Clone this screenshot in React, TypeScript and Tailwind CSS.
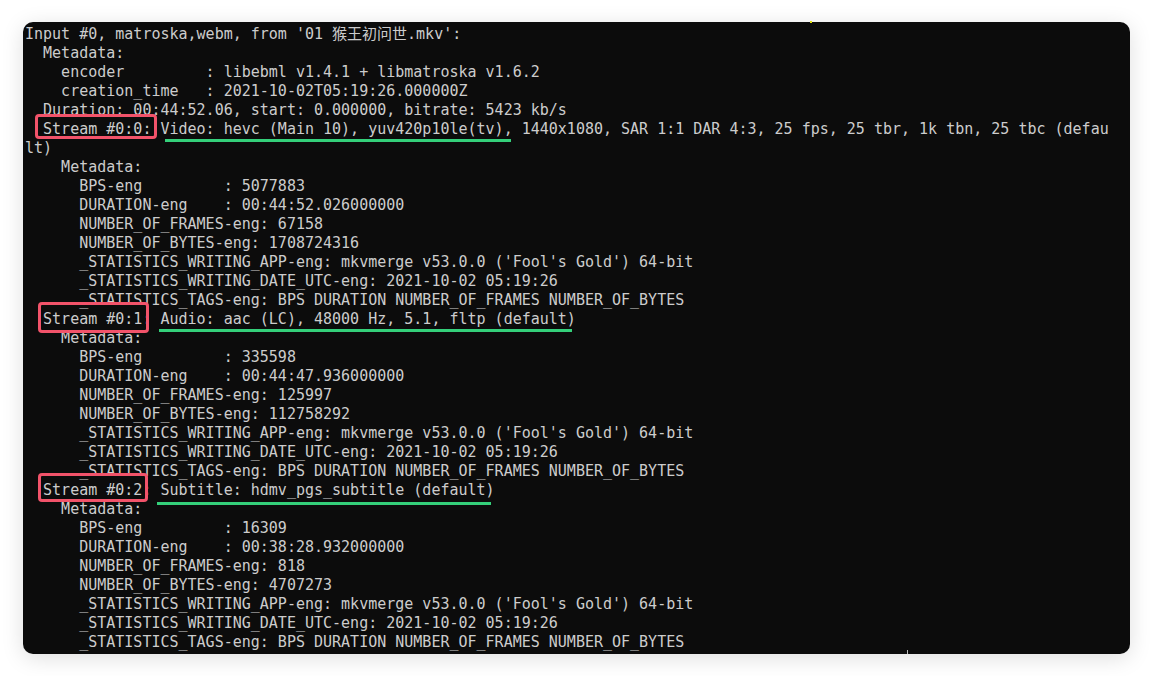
import React from "react";

const lines: string[] = [
  "Input #0, matroska,webm, from '01 猴王初问世.mkv':",
  "  Metadata:",
  "    encoder         : libebml v1.4.1 + libmatroska v1.6.2",
  "    creation_time   : 2021-10-02T05:19:26.000000Z",
  "  Duration: 00:44:52.06, start: 0.000000, bitrate: 5423 kb/s",
  "  Stream #0:0: Video: hevc (Main 10), yuv420p10le(tv), 1440x1080, SAR 1:1 DAR 4:3, 25 fps, 25 tbr, 1k tbn, 25 tbc (defau",
  "lt)",
  "    Metadata:",
  "      BPS-eng         : 5077883",
  "      DURATION-eng    : 00:44:52.026000000",
  "      NUMBER_OF_FRAMES-eng: 67158",
  "      NUMBER_OF_BYTES-eng: 1708724316",
  "      _STATISTICS_WRITING_APP-eng: mkvmerge v53.0.0 ('Fool's Gold') 64-bit",
  "      _STATISTICS_WRITING_DATE_UTC-eng: 2021-10-02 05:19:26",
  "      _STATISTICS_TAGS-eng: BPS DURATION NUMBER_OF_FRAMES NUMBER_OF_BYTES",
  "  Stream #0:1: Audio: aac (LC), 48000 Hz, 5.1, fltp (default)",
  "    Metadata:",
  "      BPS-eng         : 335598",
  "      DURATION-eng    : 00:44:47.936000000",
  "      NUMBER_OF_FRAMES-eng: 125997",
  "      NUMBER_OF_BYTES-eng: 112758292",
  "      _STATISTICS_WRITING_APP-eng: mkvmerge v53.0.0 ('Fool's Gold') 64-bit",
  "      _STATISTICS_WRITING_DATE_UTC-eng: 2021-10-02 05:19:26",
  "      _STATISTICS_TAGS-eng: BPS DURATION NUMBER_OF_FRAMES NUMBER_OF_BYTES",
  "  Stream #0:2: Subtitle: hdmv_pgs_subtitle (default)",
  "    Metadata:",
  "      BPS-eng         : 16309",
  "      DURATION-eng    : 00:38:28.932000000",
  "      NUMBER_OF_FRAMES-eng: 818",
  "      NUMBER_OF_BYTES-eng: 4707273",
  "      _STATISTICS_WRITING_APP-eng: mkvmerge v53.0.0 ('Fool's Gold') 64-bit",
  "      _STATISTICS_WRITING_DATE_UTC-eng: 2021-10-02 05:19:26",
  "      _STATISTICS_TAGS-eng: BPS DURATION NUMBER_OF_FRAMES NUMBER_OF_BYTES",
];

export default function App() {
  return (
    <div className="relative h-[676px] w-full overflow-hidden bg-white px-[23px] pt-[22px]">
      <div
        className="flex h-[632px] w-[1107px] flex-col overflow-hidden rounded-[10px] bg-[#0c0c0c] pl-[2px] pt-[3px] text-[15px] leading-[19px] text-[#cccccc] shadow-[0_4px_22px_rgba(0,0,0,0.13)]"
        style={{ fontFamily: '"DejaVu Sans Mono", "Noto Sans CJK SC", monospace' }}
      >
        {lines.map((l, i) => (
          <div key={i} className="h-[19px] shrink-0 whitespace-pre">
            {l}
          </div>
        ))}
        <div className="h-[19px] shrink-0 whitespace-pre text-[#3b78ff]">
          {"           Stream mapping:"}
        </div>
      </div>

      {/* tiny artefacts */}
      <div className="absolute left-[810px] top-[21px] h-[2px] w-[2px] bg-[#e5e510]" />
      <div className="absolute left-[907px] top-[650px] h-[4px] w-[1px] bg-[#bbbbbb]" />

      {/* annotation overlays: red boxes */}
      <div className="absolute left-[35px] top-[114px] h-[25px] w-[122px] rounded-[4px] border-[3px] border-[#f2536a]" />
      <div className="absolute left-[38px] top-[302px] h-[31px] w-[111px] rounded-[4px] border-[3px] border-[#f2536a]" />
      <div className="absolute left-[38px] top-[473px] h-[29px] w-[110px] rounded-[4px] border-[3px] border-[#f2536a]" />

      {/* annotation overlays: green underlines */}
      <div className="absolute left-[165px] top-[139px] h-[3px] w-[346px] bg-[#34d07a]" />
      <div className="absolute left-[159px] top-[329px] h-[3px] w-[413px] bg-[#34d07a]" />
      <div className="absolute left-[157px] top-[502px] h-[3px] w-[334px] bg-[#34d07a]" />
    </div>
  );
}
